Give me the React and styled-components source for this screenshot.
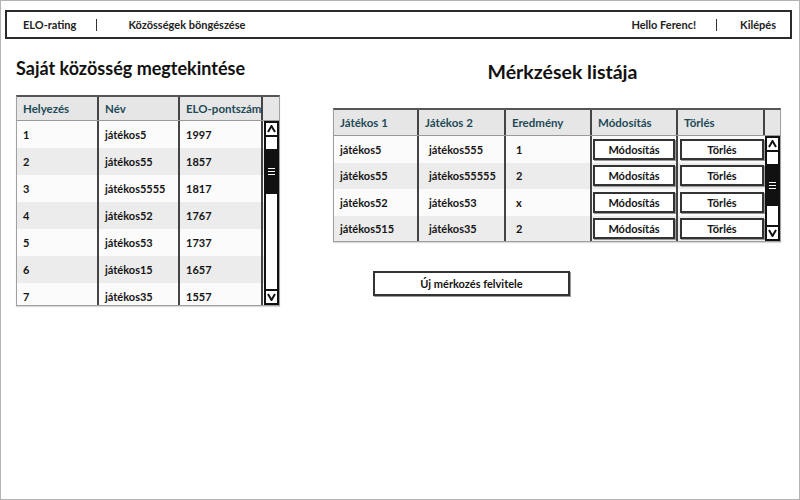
import React from "react";
import styled, { createGlobalStyle } from "styled-components";

const GlobalStyle = createGlobalStyle`
  html, body {
    margin: 0;
    padding: 0;
    background: #fff;
  }
  body {
    font-family: Lato, "DejaVu Sans Condensed", sans-serif;
    color: #1a1a1a;
  }
`;

const Page = styled.div`
  width: 800px;
  height: 500px;
  box-sizing: border-box;
  border: 1px solid #b4b4b4;
  padding: 9px 7px 0 4px;
  overflow: hidden;
`;

const TopBar = styled.div`
  height: 29px;
  box-sizing: border-box;
  border: 2px solid #2a2a2a;
  display: flex;
  align-items: center;
  padding: 0 14px 0 16px;
  font-size: 11px;
  font-weight: bold;
  color: #222;
`;

const NavGroup = styled.div`
  display: flex;
  align-items: center;
  margin-left: ${(p) => (p.$right ? "auto" : "0")};
`;

const NavItem = styled.span`
  white-space: nowrap;
`;

const Sep = styled.span`
  width: 1px;
  height: 12px;
  background: #333;
  margin: 1px ${(p) => p.$after}px 0 ${(p) => p.$before}px;
`;

const Main = styled.div`
  display: flex;
`;

const LeftCol = styled.section`
  width: 274px;
  padding-left: 11px;
`;

const RightCol = styled.section`
  flex: 1;
  padding-left: 43px;
  display: flex;
  flex-direction: column;
`;

const Heading = styled.h1`
  margin: ${(p) => p.$mt}px 0 ${(p) => p.$mb}px 0;
  font-size: ${(p) => p.$size || 18}px;
  font-weight: bold;
  line-height: 24px;
  color: #111;
  white-space: nowrap;
  text-align: ${(p) => (p.$center ? "center" : "left")};
`;

const TableBox = styled.div`
  width: ${(p) => p.$width}px;
  border: 1px solid #a0a0a0;
  border-top: 2px solid #555;
  box-shadow: 0 1px 1px rgba(0, 0, 0, 0.15);
`;

const HeaderRow = styled.div`
  display: grid;
  grid-template-columns: ${(p) => p.$cols};
  height: ${(p) => p.$h}px;
  background: #e6e6e6;
  border-bottom: 1px solid #999;
`;

const HeadCell = styled.div`
  display: flex;
  align-items: center;
  padding-left: 6px;
  font-size: 11.5px;
  font-weight: bold;
  color: #1f4a57;
  white-space: nowrap;
  overflow: hidden;
  border-right: ${(p) => (p.$last ? "none" : "2px solid #444")};
`;

const Body = styled.div`
  display: flex;
  height: ${(p) => p.$h}px;
  overflow: hidden;
`;

const Rows = styled.div`
  flex: 1;
  overflow: hidden;
`;

const Row = styled.div`
  display: grid;
  grid-template-columns: ${(p) => p.$cols};
  height: ${(p) => p.$h}px;
  background: ${(p) => (p.$alt ? "#ececec" : "#fbfbfb")};
`;

const Cell = styled.div`
  display: flex;
  align-items: center;
  padding-left: ${(p) => p.$pl || 6}px;
  font-size: 11px;
  font-weight: bold;
  color: #151515;
  white-space: nowrap;
  border-right: 2px solid #444;
`;

const ButtonCell = styled.div`
  display: flex;
  align-items: center;
  padding: 0 1px;
  border-right: ${(p) => (p.$last ? "none" : "2px solid #444")};
`;

const RowButton = styled.button`
  width: 100%;
  height: 21px;
  background: #fff;
  border: 2px solid #333;
  box-shadow: 1px 1px 0 #999;
  font-family: inherit;
  font-size: 11px;
  font-weight: bold;
  color: #151515;
  padding: 0;
  margin-left: ${(p) => p.$ml || 0}px;
  cursor: pointer;
`;

const ScrollBar = styled.div`
  width: 15px;
  box-sizing: border-box;
  border: 2px solid #111;
  display: flex;
  flex-direction: column;
  background: #fff;
`;

const Arrow = styled.div`
  height: 12px;
  display: flex;
  align-items: center;
  justify-content: center;
  border-${(p) => (p.$down ? "top" : "bottom")}: 2px solid #111;
`;

const Track = styled.div`
  flex: 1;
  display: flex;
  flex-direction: column;
`;

const Thumb = styled.div`
  margin-top: ${(p) => p.$top}px;
  height: ${(p) => p.$h}px;
  background: #111;
  display: flex;
  flex-direction: column;
  align-items: center;
  justify-content: center;
  gap: 2px;

  span {
    width: 7px;
    height: 1px;
    background: #fff;
  }
`;

const BigButton = styled.button`
  width: 197px;
  height: 25px;
  margin: 29px 0 0 40px;
  background: #fff;
  border: 2px solid #333;
  box-shadow: 1px 1px 0 #999;
  font-family: inherit;
  font-size: 11px;
  font-weight: bold;
  color: #151515;
  cursor: pointer;
`;

const UpIcon = () => (
  <svg width="9" height="8" viewBox="0 0 9 8">
    <path d="M1 7 L4.5 1 L8 7" fill="none" stroke="#111" strokeWidth="2" />
  </svg>
);

const DownIcon = () => (
  <svg width="9" height="8" viewBox="0 0 9 8">
    <path d="M1 1 L4.5 7 L8 1" fill="none" stroke="#111" strokeWidth="2" />
  </svg>
);

const Scroll = ({ thumbTop, thumbH }) => (
  <ScrollBar>
    <Arrow>
      <UpIcon />
    </Arrow>
    <Track>
      <Thumb $top={thumbTop} $h={thumbH}>
        <span />
        <span />
        <span />
      </Thumb>
    </Track>
    <Arrow $down>
      <DownIcon />
    </Arrow>
  </ScrollBar>
);

const ranking = [
  ["1", "játékos5", "1997"],
  ["2", "játékos55", "1857"],
  ["3", "játékos5555", "1817"],
  ["4", "játékos52", "1767"],
  ["5", "játékos53", "1737"],
  ["6", "játékos15", "1657"],
  ["7", "játékos35", "1557"],
];

const matches = [
  ["játékos5", "játékos555", "1"],
  ["játékos55", "játékos55555", "2"],
  ["játékos52", "játékos53", "x"],
  ["játékos515", "játékos35", "2"],
];

const leftCols = "82px 81px 83px 15px";
const leftRowCols = "82px 81px 83px";
const rightCols = "85px 87px 86px 86px 87px 16px";
const rightRowCols = "85px 87px 86px 86px 87px";

export default function App() {
  return (
    <>
      <GlobalStyle />
      <Page>
        <TopBar>
          <NavGroup>
            <NavItem>ELO-rating</NavItem>
            <Sep $before={20} $after={31} />
            <NavItem>Közösségek böngészése</NavItem>
          </NavGroup>
          <NavGroup $right>
            <NavItem>Hello Ferenc!</NavItem>
            <Sep $before={20} $after={23} />
            <NavItem>Kilépés</NavItem>
          </NavGroup>
        </TopBar>

        <Main>
          <LeftCol>
            <Heading $mt={17} $mb={15}>
              Saját közösség megtekintése
            </Heading>
            <TableBox $width={262}>
              <HeaderRow $cols={leftCols} $h={23}>
                <HeadCell>Helyezés</HeadCell>
                <HeadCell>Név</HeadCell>
                <HeadCell>ELO-pontszám</HeadCell>
                <HeadCell $last />
              </HeaderRow>
              <Body $h={184}>
                <Rows>
                  {ranking.map((r, i) => (
                    <Row key={r[0]} $cols={leftRowCols} $h={27} $alt={i % 2 === 1}>
                      <Cell>{r[0]}</Cell>
                      <Cell>{r[1]}</Cell>
                      <Cell>{r[2]}</Cell>
                    </Row>
                  ))}
                </Rows>
                <Scroll thumbTop={12} thumbH={45} />
              </Body>
            </TableBox>
          </LeftCol>

          <RightCol>
            <Heading $mt={21} $mb={24} $size={19.5} $center>
              Mérkzések listája
            </Heading>
            <TableBox $width={446}>
              <HeaderRow $cols={rightCols} $h={25}>
                <HeadCell>Játékos 1</HeadCell>
                <HeadCell>Játékos 2</HeadCell>
                <HeadCell>Eredmény</HeadCell>
                <HeadCell>Módosítás</HeadCell>
                <HeadCell>Törlés</HeadCell>
                <HeadCell $last />
              </HeaderRow>
              <Body $h={105}>
                <Rows>
                  {matches.map((m, i) => (
                    <Row key={i} $cols={rightRowCols} $h={26.5} $alt={i % 2 === 1}>
                      <Cell>{m[0]}</Cell>
                      <Cell $pl={10}>{m[1]}</Cell>
                      <Cell $pl={10}>{m[2]}</Cell>
                      <ButtonCell>
                        <RowButton>Módosítás</RowButton>
                      </ButtonCell>
                      <ButtonCell $last>
                        <RowButton $ml={1}>Törlés</RowButton>
                      </ButtonCell>
                    </Row>
                  ))}
                </Rows>
                <Scroll thumbTop={12} thumbH={42} />
              </Body>
            </TableBox>
            <BigButton>Új mérkozés felvitele</BigButton>
          </RightCol>
        </Main>
      </Page>
    </>
  );
}
